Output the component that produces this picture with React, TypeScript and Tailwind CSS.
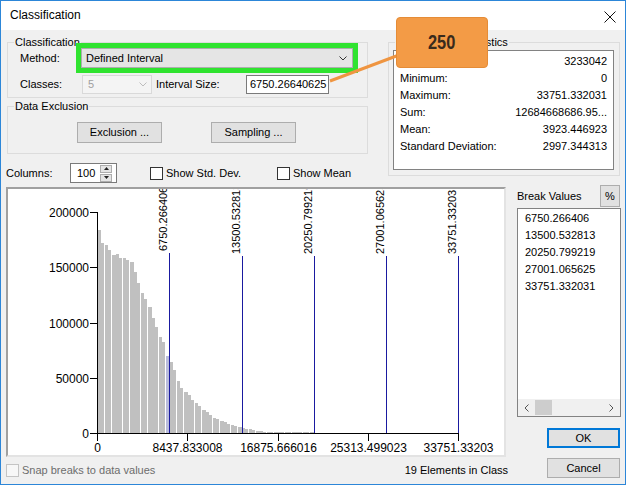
import React from 'react';

// histogram counts, in thousands, for the 100 columns
const HIST = [
  184, 172, 170, 166, 161, 162, 158, 158, 157, 155, 146, 136, 127, 121, 114, 104, 96, 87, 82, 70,
  64, 57, 47, 41, 37, 34, 30, 27, 24, 21, 19, 16, 14, 12.5, 11, 10, 8.5, 7.5, 6.5, 5.5,
  4.8, 4, 3.3, 2.7, 2.2, 1.7, 1.3, 1, 0.7, 0.5, 0.35, 0.25, 0.2, 0.15, 0.1, 0.1, 0.08, 0.05, 0.05, 0.03,
];

const BREAKS = ['6750.266406', '13500.532813', '20250.799219', '27001.065625', '33751.332031'];
const BREAK_X = [169, 242, 314, 386, 458];
const BREAK_TOP = [253, 256, 256, 256, 256];

const STATS: [string, string][] = [
  ['Count:', '3233042'],
  ['Minimum:', '0'],
  ['Maximum:', '33751.332031'],
  ['Sum:', '12684668686.95...'],
  ['Mean:', '3923.446923'],
  ['Standard Deviation:', '2997.344313'],
];

const BASE = 433;
const K = 221 / 200000;

function Chevron({ color = '#333' }: { color?: string }) {
  return (
    <svg width="8" height="5" viewBox="0 0 8 5">
      <polyline points="0.5,0.5 4,4 7.5,0.5" fill="none" stroke={color} strokeWidth="1" />
    </svg>
  );
}

function Box() {
  return <span className="w-[13px] h-[13px] border border-[#333333] bg-white shrink-0" />;
}

function Chart() {
  const yTicks = [0, 50000, 100000, 150000, 200000];
  const xTicks: [number, string][] = [
    [97, '0'],
    [187, '8437.833008'],
    [278, '16875.666016'],
    [368, '25313.499023'],
    [458, '33751.33203'],
  ];
  return (
    <svg width={496} height={266} viewBox="8 189 496 266" shapeRendering="crispEdges" className="block">
      {HIST.map((v, i) => {
        const x0 = Math.floor(98 + i * 3.6);
        const x1 = Math.floor(98 + (i + 1) * 3.6);
        const w = i % 5 === 1 || i % 5 === 3 ? x1 - x0 - 1 : x1 - x0;
        const h = Math.max(1, Math.round(v * 1000 * K));
        return (
          <rect key={i} x={x0} y={BASE - h} width={w} height={h} fill={i === 19 ? '#b9bcdc' : '#c0c0c0'} />
        );
      })}
      {/* break lines */}
      {BREAK_X.map((x, i) => (
        <rect key={x} x={x} y={BREAK_TOP[i]} width={1} height={BASE - BREAK_TOP[i]} fill="#1a1aa0" />
      ))}
      {BREAK_X.map((x, i) => (
        <text
          key={'l' + x}
          transform={`translate(${x - 2},${BREAK_TOP[i] - 2}) rotate(-90)`}
          fontSize={11}
          fontFamily="'Liberation Sans', Arial, sans-serif"
          fill="#000"
        >
          {BREAKS[i]}
        </text>
      ))}
      {/* axes */}
      <rect x={97} y={212} width={1} height={222} fill="#000" />
      <rect x={97} y={BASE} width={362} height={1} fill="#000" />
      {yTicks.map((t) => {
        const y = Math.round(BASE - t * K);
        return (
          <g key={t}>
            <rect x={90} y={y} width={7} height={1} fill="#000" />
            <text
              x={89}
              y={y + 5}
              textAnchor="end"
              fontSize={12}
              fontFamily="'Liberation Sans', Arial, sans-serif"
            >
              {t}
            </text>
          </g>
        );
      })}
      {xTicks.map(([x, label]) => (
        <g key={label}>
          <rect x={x} y={BASE} width={1} height={8} fill="#000" />
          <text x={x + 0.5} y={452} textAnchor="middle" fontSize={12} fontFamily="'Liberation Sans', Arial, sans-serif">
            {label}
          </text>
        </g>
      ))}
    </svg>
  );
}

export default function App() {
  return (
    <div className="relative w-[626px] h-[485px] border border-[#2c86d8] bg-[#f0f0f0] text-[11px] leading-[13px] text-black overflow-hidden flex flex-col font-['Liberation_Sans',Arial,sans-serif]">
      {/* title bar */}
      <div className="h-[29px] bg-white flex items-center justify-between pl-[9px] pr-[9px] text-[12px]">
        <span>Classification</span>
        <svg width="12" height="12" viewBox="0 0 12 12" className="mt-[3px]">
          <path d="M0.5 0.5 L11.5 11.5 M11.5 0.5 L0.5 11.5" stroke="#111" strokeWidth="1" />
        </svg>
      </div>

      <div className="flex-1 flex flex-col px-[5px]">
        {/* top area */}
        <div className="flex items-start">
          <div className="w-[363px] flex flex-col">
            <fieldset className="ml-[1px] mt-[6px] h-[62px] w-[361px] border border-[#dcdcdc]">
              <legend className="ml-[6px] px-[1px] leading-[13px]">Classification</legend>
              <div className="flex items-center h-[20px] -mt-[1px]">
                <span className="ml-[12px] w-[61px]">Method:</span>
                <div className="w-[272px] h-[20px] bg-[#e5e5e5] border border-[#adadad] outline-solid outline-5 outline-[#2fe32f] flex items-center justify-between pl-[4px] pr-[5px]">
                  <span>Defined Interval</span>
                  <Chevron />
                </div>
              </div>
              <div className="flex items-center h-[19px] mt-[7px]">
                <span className="ml-[12px] w-[62px]">Classes:</span>
                <div className="w-[70px] h-[19px] bg-[#f4f4f4] border border-[#d9d9d9] flex items-center justify-between pl-[5px] pr-[4px] text-[#a0a0a0]">
                  <span>5</span>
                  <Chevron color="#bdbdbd" />
                </div>
                <span className="ml-[4px] w-[90px]">Interval Size:</span>
                <div className="w-[83px] h-[19px] bg-white border border-[#7a7a7a] flex items-center pl-[3px] overflow-hidden whitespace-nowrap">
                  6750.26640625
                </div>
              </div>
            </fieldset>

            <fieldset className="ml-[1px] mt-[2px] h-[54px] w-[361px] border border-[#dcdcdc]">
              <legend className="ml-[6px] px-[1px] leading-[13px]">Data Exclusion</legend>
              <div className="flex mt-[9px]">
                <button className="ml-[69px] w-[85px] h-[21px] bg-[#e1e1e1] border border-[#adadad]">Exclusion ...</button>
                <button className="ml-[49px] w-[85px] h-[21px] bg-[#e1e1e1] border border-[#adadad]">Sampling ...</button>
              </div>
            </fieldset>

            <div className="flex items-center h-[20px] mt-[9px]">
              <span className="w-[64px]">Columns:</span>
              <div className="w-[47px] h-[20px] bg-white border border-[#7a7a7a] flex items-center">
                <span className="pl-[6px] flex-1">100</span>
                <div className="w-[12px] mr-[4px] flex flex-col gap-[1px]">
                  <div className="h-[8px] bg-[#e5e5e5] border border-[#adadad] flex items-center justify-center">
                    <svg width="5" height="3" viewBox="0 0 5 3"><polygon points="0,3 2.5,0 5,3" fill="#222" /></svg>
                  </div>
                  <div className="h-[8px] bg-[#e5e5e5] border border-[#adadad] flex items-center justify-center">
                    <svg width="5" height="3" viewBox="0 0 5 3"><polygon points="0,0 2.5,3 5,0" fill="#222" /></svg>
                  </div>
                </div>
              </div>
              <label className="ml-[33px] w-[127px] flex items-center gap-[3px]">
                <Box />
                <span>Show Std. Dev.</span>
              </label>
              <label className="flex items-center gap-[3px]">
                <Box />
                <span>Show Mean</span>
              </label>
            </div>
          </div>

          <fieldset className="ml-[19px] mt-[6px] w-[232px] h-[140px] border border-[#dcdcdc]">
            <legend className="ml-[6px] px-[1px] leading-[13px]">Classification Statistics</legend>
            <div className="mt-[1px] ml-[4px] mr-[5px] h-[120px] bg-white border border-[#828282] pt-[2px] px-[6px]">
              {STATS.map(([k, v]) => (
                <div key={k} className="flex justify-between h-[17px] items-center">
                  <span>{k}</span>
                  <span>{v}</span>
                </div>
              ))}
            </div>
          </fieldset>
        </div>

        {/* chart and break values */}
        <div className="flex mt-[2px]">
          <div className="w-[502px] flex flex-col">
            <div className="mt-[2px] w-[500px] h-[270px] bg-white border-2 border-t-[#a0a0a0] border-l-[#a0a0a0] border-r-[#e3e3e3] border-b-[#e3e3e3] overflow-hidden">
              <Chart />
            </div>
            <div className="flex items-center justify-between h-[20px] mt-[3px]">
              <label className="flex items-center gap-[3px] text-[#6d6d6d]">
                <span className="w-[13px] h-[13px] border border-[#c4c4c4] bg-[#f7f7f7]" />
                <span>Snap breaks to data values</span>
              </label>
              <span>19 Elements in Class</span>
            </div>
          </div>

          <div className="ml-[9px] w-[103px] flex flex-col">
            <div className="flex items-center justify-between h-[22px]">
              <span>Break Values</span>
              <button className="w-[20px] h-[22px] bg-[#e1e1e1] border border-[#adadad] flex items-center justify-center">%</button>
            </div>
            <div className="mt-[1px] h-[209px] w-[104px] bg-white border border-[#828282] flex flex-col">
              <div className="flex-1 pt-[1px] pl-[7px]">
                {BREAKS.map((b) => (
                  <div key={b} className="h-[17px] flex items-center">{b}</div>
                ))}
              </div>
              <div className="h-[17px] bg-[#f0f0f0] flex items-center">
                <div className="w-[17px] flex items-center justify-center">
                  <svg width="5" height="8" viewBox="0 0 5 8"><polyline points="4.5,0.5 1,4 4.5,7.5" fill="none" stroke="#555" /></svg>
                </div>
                <div className="w-[17px] h-[15px] bg-[#cdcdcd]" />
                <div className="flex-1" />
                <div className="w-[17px] flex items-center justify-center">
                  <svg width="5" height="8" viewBox="0 0 5 8"><polyline points="0.5,0.5 4,4 0.5,7.5" fill="none" stroke="#555" /></svg>
                </div>
              </div>
            </div>
            <button className="mt-[11px] ml-auto w-[73px] h-[20px] bg-[#e1e1e1] border-2 border-[#0078d7]">OK</button>
            <button className="mt-[10px] ml-auto w-[73px] h-[20px] bg-[#e1e1e1] border border-[#adadad]">Cancel</button>
          </div>
        </div>
      </div>

      {/* annotation callout */}
      <svg className="absolute left-[324px] top-[49px]" width="80" height="40" viewBox="0 0 80 40">
        <line x1="74" y1="5" x2="5" y2="31" stroke="#ef9541" strokeWidth="3" />
      </svg>
      <div className="absolute left-[395px] top-[16px] w-[92px] h-[51px] rounded-[4px] bg-[#f39b46] border border-[#e58c37] flex items-center justify-center font-bold text-[20px] text-[#3a2a1c] font-['Liberation_Sans_Narrow','Liberation_Sans',Arial,sans-serif]">
        <span className="inline-block scale-x-[0.82]">250</span>
      </div>
    </div>
  );
}
